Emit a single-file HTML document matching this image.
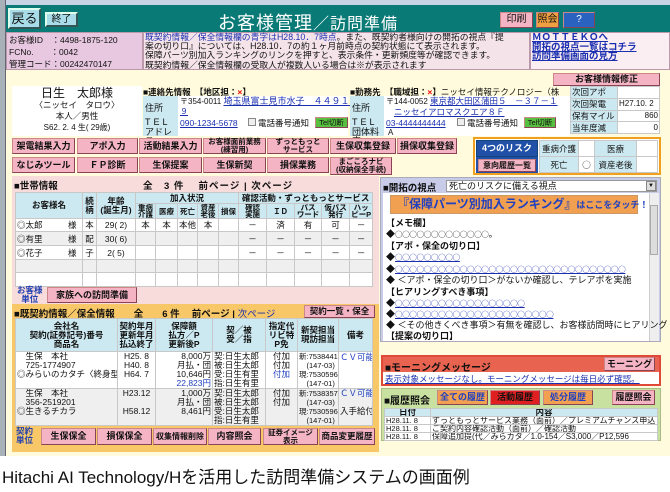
<!DOCTYPE html>
<html><head><meta charset="utf-8"><style>
*{margin:0;padding:0;box-sizing:border-box}
body{width:670px;height:492px;background:#fff;position:relative;overflow:hidden;font-family:"Liberation Sans","Noto Sans CJK JP",sans-serif;font-size:9px;color:#111}
.a{position:absolute}
.btn{position:absolute;background:#f4b4c4;border:1px solid #c88;border-right-color:#845;border-bottom-color:#845;font-weight:bold;font-size:9px;text-align:center;display:flex;align-items:center;justify-content:center;line-height:1;white-space:nowrap}
.b2{font-size:7.5px;line-height:8px}
table{border-collapse:collapse;table-layout:fixed;position:absolute}
td{border:1px solid #c8c8c8;font-size:8.5px;line-height:10px;padding:0 1px;white-space:nowrap;overflow:hidden}
.h td{background:#cce8f0;font-weight:bold;text-align:center;line-height:9px;font-size:8.5px}
.u{color:#1a2fb0;text-decoration:underline}
.lb{background:#cce8f0}
.ln{position:absolute;left:386px;white-space:nowrap;font-size:9px;line-height:10px}
.c{font-family:"Noto Sans CJK JP",sans-serif;font-size:7.5px;letter-spacing:-0.3px}
</style></head><body>
<div class="a" style="left:0;top:0;width:670px;height:456px;background:#fffbdc"></div>
<div class="a" style="left:0;top:0;width:670px;height:5px;background:#c8d4e4"></div>
<div class="a" style="left:0;top:0;width:6px;height:456px;background:#a8b0b8;border-right:1px solid #667"></div>
<div class="a" style="left:6px;top:5px;width:664px;height:27px;background:#0a7a76"></div>
<div class="btn" style="left:8px;top:8px;width:33px;height:21px;background:#a8dce8;font-weight:normal;font-size:13px;border:2px solid #dfe;border-right-color:#355;border-bottom-color:#355">戻る</div>
<div class="btn" style="left:45px;top:12px;width:33px;height:15px;background:#a8dce8;font-weight:normal;font-size:10px;border:2px solid #dfe;border-right-color:#355;border-bottom-color:#355">終了</div>
<div class="a" style="left:218px;top:9px;color:#fff;font-size:18px;letter-spacing:1px;white-space:nowrap">お客様管理<span style="font-size:16px">／訪問準備</span></div>
<div class="btn" style="left:500px;top:12px;width:33px;height:16px;font-weight:normal;font-size:10px">印刷</div>
<div class="btn" style="left:536px;top:12px;width:23px;height:16px;background:#f0a040;font-weight:normal;font-size:10px">照会</div>
<div class="btn" style="left:563px;top:12px;width:32px;height:16px;background:#2a62c0;color:#fff;font-weight:normal;font-size:10px">?</div>
<div class="a" style="left:6px;top:32px;width:137px;height:38px;background:#e8c8e0;border:1px solid #b9a"></div>
<div class="a" style="left:9px;top:34px;font-size:8.5px;line-height:12px;white-space:nowrap">お客様ID　：4498-1875-120<br>FCNo.　　：0042<br>管理コード：00242470147</div>
<div class="a" style="left:143px;top:32px;width:387px;height:38px;background:#f4e4ea;border:1px solid #b9a"></div>
<div class="a" style="left:145px;top:33px;font-size:8.8px;line-height:9.2px;white-space:nowrap"><span style="color:#2030b0">既契約情報／保全情報欄の青字はH28.10．7時点</span>。また、既契約者様向けの開拓の視点『提<br>案の切り口』については、H28.10．7の約１ヶ月前時点の契約状態にて表示されます。<br>保障パーツ別加入ランキングのリンクを押すと、表示条件・更新頻度等が確認できます。<br>既契約情報／保全情報欄の受取人が複数人いる場合は※が表示されます</div>
<div class="a" style="left:530px;top:32px;width:140px;height:38px;background:#fbeef2;border:1px solid #b9a"></div>
<div class="a u" style="left:532px;top:33px;font-size:9.5px;line-height:9.5px;font-weight:bold;white-space:nowrap">ＭＯＴＴＥＫＯへ<br>開拓の視点一覧はコチラ<br>訪問準備画面の見方</div>
<div class="a" style="left:12px;top:86px;width:130px;height:50px;background:#fff"></div>
<div class="a" style="left:12px;top:88px;width:130px;text-align:center;line-height:11px;white-space:nowrap"><span style="font-size:12px">日生　太郎様</span><br><span style="font-size:8.5px">〈ニッセイ　タロウ〉</span><br><span style="font-size:8.5px">本人／男性</span><br><span style="font-size:8px">S62. 2. 4 生( 29歳)</span></div>
<div class="a" style="left:143px;top:86px;font-size:8.5px;font-weight:bold;white-space:nowrap">■連絡先情報　【地区担：<span style="color:#e00">×</span>】</div>
<div class="a" style="left:143px;top:96px;width:205px;height:40px;background:#fff"></div>
<div class="a lb" style="left:143px;top:96px;width:35px;height:21px;padding:5px 2px">住所</div>
<div class="a lb" style="left:143px;top:117px;width:35px;height:11px;padding:0 2px;letter-spacing:3px">TEL</div>
<div class="a lb" style="left:143px;top:128px;width:35px;height:8px;padding:0 2px;line-height:9px">アドレス</div>
<div class="a" style="left:180px;top:96px;font-size:8px;line-height:10px;white-space:nowrap">〒354-0011 <span class="u" style="font-size:9px">埼玉県富士見市水子　４４９１－</span><br><span class="u">９</span></div>
<div class="a u" style="left:180px;top:118px;font-size:8.5px">090-1234-5678</div>
<div class="a" style="left:248px;top:118px;width:8px;height:8px;border:1px solid #888;background:#eee"></div>
<div class="a" style="left:258px;top:117px;font-size:8.5px">電話番号通知</div>
<div class="btn" style="left:315px;top:117px;width:33px;height:11px;background:#58c040;font-size:7.5px;font-weight:normal">Tel切断</div>
<div class="a" style="left:350px;top:86px;font-size:8.5px;font-weight:bold;white-space:nowrap">■勤務先　【職域担：<span style="color:#e00">×</span>】<span style="font-weight:normal">ニッセイ情報テクノロジー（株</span></div>
<div class="a" style="left:350px;top:96px;width:220px;height:40px;background:#fff"></div>
<div class="a lb" style="left:350px;top:96px;width:34px;height:21px;padding:5px 2px">住所</div>
<div class="a lb" style="left:350px;top:117px;width:34px;height:11px;padding:0 2px;letter-spacing:3px">TEL</div>
<div class="a lb" style="left:350px;top:128px;width:34px;height:8px;padding:0 2px;line-height:9px">団体料率</div>
<div class="a" style="left:386px;top:96px;font-size:8px;line-height:10px;white-space:nowrap">〒144-0052 <span class="u" style="font-size:8.5px">東京都大田区蒲田５　－３７－１</span><br>　<span class="u" style="font-size:8.5px">ニッセイアロマスクエア８Ｆ</span></div>
<div class="a u" style="left:386px;top:118px;font-size:8.5px">03-4444444444</div>
<div class="a" style="left:457px;top:118px;width:8px;height:8px;border:1px solid #888;background:#eee"></div>
<div class="a" style="left:467px;top:117px;font-size:8.5px">電話番号通知</div>
<div class="btn" style="left:524px;top:117px;width:32px;height:11px;background:#58c040;font-size:7.5px;font-weight:normal">Tel切断</div>
<div class="a" style="left:388px;top:128px;font-size:8px">A</div>
<div class="btn" style="left:553px;top:73px;width:107px;height:13px">お客様情報修正</div>
<table style="left:570px;top:86px;width:90px;height:48px"><tr><td class="lb" style="width:47px">次回アポ</td><td style="background:#fff"></td></tr><tr><td class="lb">次回架電</td><td style="background:#fff;font-size:8px">H27.10. 2</td></tr><tr><td class="lb">保有マイル</td><td style="background:#fff;text-align:right;font-size:8px">860</td></tr><tr><td class="lb">当年度減</td><td style="background:#fff;text-align:right;font-size:8px">0</td></tr></table>
<div class="btn" style="left:12px;top:138px;width:63px;height:16px">架電結果入力</div>
<div class="btn" style="left:77px;top:138px;width:61px;height:16px">アポ入力</div>
<div class="btn" style="left:139px;top:138px;width:63px;height:16px">活動結果入力</div>
<div class="btn b2" style="left:203px;top:138px;width:63px;height:16px">お客様面前業務<br>(練習用)</div>
<div class="btn b2" style="left:267px;top:138px;width:62px;height:16px">ずっともっと<br>サービス</div>
<div class="btn" style="left:330px;top:138px;width:66px;height:16px">生保収集登録</div>
<div class="btn" style="left:397px;top:138px;width:60px;height:16px">損保収集登録</div>
<div class="btn" style="left:12px;top:157px;width:63px;height:16px">なじみツール</div>
<div class="btn" style="left:77px;top:157px;width:61px;height:16px">ＦＰ診断</div>
<div class="btn" style="left:139px;top:157px;width:63px;height:16px">生保提案</div>
<div class="btn" style="left:203px;top:157px;width:63px;height:16px">生保新契</div>
<div class="btn" style="left:267px;top:157px;width:62px;height:16px">損保業務</div>
<div class="btn b2" style="left:330px;top:157px;width:62px;height:18px">まごころナビ<br>(収納保全手続)</div>
<div class="a" style="left:473px;top:137px;width:188px;height:38px;background:#fff;border:2px solid #f0a020"></div>
<div class="btn" style="left:476px;top:140px;width:62px;height:17px;background:#2050a8;color:#fff;border-color:#147">4つのリスク</div>
<div class="a" style="left:476px;top:157px;width:62px;height:16px;background:#2050a8"></div>
<div class="btn" style="left:478px;top:159px;width:58px;height:13px;font-size:8px">意向履歴一覧</div>
<table style="left:539px;top:140px;width:119px;height:33px"><tr><td class="lb" style="width:39px;text-align:center">重病介護</td><td style="width:16px"></td><td class="lb" style="width:42px;text-align:center">医療</td><td></td></tr><tr><td class="lb" style="text-align:center">死亡</td><td style="text-align:center;font-family:'Noto Sans CJK JP',sans-serif">○</td><td class="lb" style="text-align:center">資産老後</td><td></td></tr></table>
<div class="a" style="left:12px;top:176px;width:367px;height:128px;background:#f8dcdc"></div>
<div class="a" style="left:14px;top:178px;font-size:9.5px;font-weight:bold;white-space:nowrap">■世帯情報</div>
<div class="a" style="left:143px;top:178px;font-size:9.5px;font-weight:bold;white-space:nowrap;letter-spacing:1px">全　3 件　 前ページ | 次ページ</div>
<table style="left:15px;top:192px;width:357px;background:#fff">
<colgroup><col style="width:67px"><col style="width:14px"><col style="width:39px"><col style="width:20px"><col style="width:22px"><col style="width:20px"><col style="width:21px"><col style="width:20px"><col style="width:28px"><col style="width:28px"><col style="width:27px"><col style="width:28px"><col style="width:23px"></colgroup>
<tr class="h" style="height:11px"><td rowspan="2">お客様名</td><td rowspan="2">続<br>柄</td><td rowspan="2">年齢<br>(誕生月)</td><td colspan="5">加入状況</td><td colspan="5">確認活動・ずっともっとサービス</td></tr>
<tr class="h" style="height:14px;font-size:7.5px"><td style="font-size:7.5px;line-height:7px">重病<br>介護</td><td style="font-size:7.5px">医療</td><td style="font-size:7.5px">死亡</td><td style="font-size:7.5px;line-height:7px">資産<br>老後</td><td style="font-size:7.5px">損保</td><td style="font-size:7.5px;line-height:7px">確認<br>実施</td><td style="font-size:7.5px">ＩＤ</td><td style="font-size:7.5px;line-height:7px">パス<br>ワード</td><td style="font-size:7.5px;line-height:7px">仮パス<br>発行</td><td style="font-size:7.5px;line-height:7px">ハッ<br>ピーP</td></tr>
<tr style="height:13px;text-align:center"><td style="text-align:left">◎太郎　　　様</td><td>本</td><td>29( 2)</td><td>本</td><td>本</td><td>本他</td><td>本</td><td></td><td>－</td><td>済</td><td>有</td><td>可</td><td>－</td></tr>
<tr style="height:14px;text-align:center;background:#efefef"><td style="text-align:left">◎有里　　　様</td><td>配</td><td>30( 6)</td><td></td><td></td><td></td><td></td><td></td><td>－</td><td>－</td><td>－</td><td>－</td><td>－</td></tr>
<tr style="height:14px;text-align:center"><td style="text-align:left">◎花子　　　様</td><td>子</td><td>2( 5)</td><td></td><td></td><td></td><td></td><td></td><td>－</td><td>－</td><td>－</td><td>－</td><td>－</td></tr>
<tr style="height:13px;background:#efefef"><td></td><td></td><td></td><td></td><td></td><td></td><td></td><td></td><td></td><td></td><td></td><td></td><td></td></tr>
<tr style="height:14px"><td></td><td></td><td></td><td></td><td></td><td></td><td></td><td></td><td></td><td></td><td></td><td></td><td></td></tr>
</table>
<div class="a" style="left:17px;top:286px;font-size:8.5px;line-height:9px;font-weight:bold;color:#2040b0;text-align:center">お客様<br>単位</div>
<div class="btn" style="left:47px;top:287px;width:90px;height:16px">家族への訪問準備</div>
<div class="a" style="left:12px;top:304px;width:367px;height:148px;background:#f8c868"></div>
<div class="a" style="left:14px;top:306px;font-size:9.5px;font-weight:bold;white-space:nowrap">■既契約情報／保全情報　　全　　6 件　 前ページ | <span class="u" style="font-weight:normal">次ページ</span></div>
<div class="btn" style="left:304px;top:305px;width:71px;height:13px;font-size:8.5px">契約一覧・保全</div>
<table style="left:15px;top:318px;width:357px;background:#fff">
<colgroup><col style="width:102px"><col style="width:38px"><col style="width:57px"><col style="width:53px"><col style="width:32px"><col style="width:41px"><col style="width:34px"></colgroup>
<tr class="h" style="height:33px"><td>会社名<br>契約(証券記号)番号<br>商品名</td><td>契約年月<br>更新年月<br>払込終了</td><td>保障額<br>払方／P<br>更新後P</td><td>契／被<br>受／指</td><td>指定代<br>リビ特<br>P免</td><td>新契担当<br>現訪担当</td><td>備考</td></tr>
<tr style="height:37px;vertical-align:top;font-size:8px"><td style="line-height:9px">　生保　本社<br>　725-1774907<br>◎みらいのカタチ〈終身型</td><td style="line-height:9px;text-align:center">H25. 8<br>H40. 8<br>H64. 7</td><td style="line-height:9px;text-align:right">8,000万<br>月払・団<br>10,646円<br><span style="color:#2040c0">22,823円</span></td><td style="line-height:9px">契:日生太郎<br>被:日生太郎<br>受:日生有里<br>指:日生有里</td><td style="line-height:9px;text-align:center">付加<br>付加<br><span style="color:#2040c0">付加</span></td><td style="line-height:9px;font-size:7.5px">新:7538441<br>　(147-03)<br>現:7530596<br>　(147-01)</td><td style="color:#2040c0">ＣＶ可能</td></tr>
<tr style="height:37px;vertical-align:top;background:#efefef"><td style="line-height:9px">　生保　本社<br>　356-2519201<br>◎生きるチカラ</td><td style="line-height:9px;text-align:center">H23.12<br><br>H58.12</td><td style="line-height:9px;text-align:right">1,000万<br>月払・団<br>8,461円</td><td style="line-height:9px">契:日生太郎<br>被:日生太郎<br>受:日生太郎<br>指:日生有里</td><td style="line-height:9px;text-align:center">付加<br>付加</td><td style="line-height:9px;font-size:7.5px">新:7538357<br>　(147-03)<br>現:7530596<br>　(147-01)</td><td style="line-height:9px"><span style="color:#2040c0">ＣＶ可能</span><br><br>入手給付</td></tr>
</table>
<div class="a" style="left:16px;top:427px;font-size:8.5px;line-height:9px;font-weight:bold;color:#2040b0;text-align:center">契約<br>単位</div>
<div class="btn" style="left:41px;top:428px;width:55px;height:17px">生保保全</div>
<div class="btn" style="left:97px;top:428px;width:55px;height:17px">損保保全</div>
<div class="btn" style="left:153px;top:428px;width:54px;height:17px;font-size:8px">収集情報削除</div>
<div class="btn" style="left:208px;top:428px;width:53px;height:17px">内容照会</div>
<div class="btn b2" style="left:263px;top:428px;width:55px;height:17px">証券イメージ<br>表示</div>
<div class="btn" style="left:319px;top:428px;width:56px;height:17px;font-size:8.5px">商品変更履歴</div>
<div class="a" style="left:380px;top:177px;width:281px;height:165px;background:#c8cce8;border:1px solid #aab"></div>
<div class="a" style="left:383px;top:180px;font-size:9.5px;font-weight:bold">■開拓の視点</div>
<div class="a" style="left:446px;top:180px;width:211px;height:12px;background:#fff;border:1px solid #999;font-size:9px;line-height:10px;padding-left:2px">死亡のリスクに備える視点</div>
<div class="a" style="left:646px;top:181px;width:10px;height:10px;background:#ddd;border:1px solid #888;font-size:6px;text-align:center;line-height:9px">▼</div>
<div class="a" style="left:383px;top:193px;width:266px;height:148px;background:#fff"></div>
<div class="a" style="left:649px;top:193px;width:10px;height:148px;background:#eee;border-left:1px solid #ccc"></div>
<div class="a" style="left:650px;top:205px;width:8px;height:50px;background:#ddd;border:1px solid #aaa"></div>
<div class="a" style="left:390px;top:195px;width:248px;height:19px;background:#f0a050;border:1px solid #c96;color:#2040c0;font-weight:bold;font-size:12px;line-height:17px;padding-left:6px;white-space:nowrap">『保障パーツ別加入ランキング』<span style="font-size:9px">はここをタッチ！</span></div>
<div class="ln" style="top:218px;font-weight:bold">【メモ欄】</div>
<div class="ln" style="top:229px">◆<span class="c">○○○○○○○○○○○○○</span>。</div>
<div class="ln" style="top:241px;font-weight:bold">【アポ・保全の切り口】</div>
<div class="ln" style="top:252px">◆<span class="u c">○○○○○○○○○</span></div>
<div class="ln" style="top:264px">◆<span class="u c">○○○○○○○○○○○○○○○○○○○○○○○○○○○○○○○○</span></div>
<div class="ln" style="top:275px">◆ ＜アポ・保全の切り口＞がないか確認し、テレアポを実施</div>
<div class="ln" style="top:287px;font-weight:bold">【ヒアリングすべき事項】</div>
<div class="ln" style="top:298px">◆<span class="u c">○○○○○○○○○○○○○○○○○○</span></div>
<div class="ln" style="top:309px">◆<span class="u c">○○○○○○○○○○○○○○○○○○○○○○</span></div>
<div class="ln" style="top:320px">◆ ＜その他きくべき事項＞有無を確認し、お客様訪問時にヒアリング</div>
<div class="ln" style="top:331px;font-weight:bold">【提案の切り口】</div>
<div class="a" style="left:383px;top:342px;width:278px;height:2px;background:#fffbdc"></div>
<div class="a" style="left:381px;top:355px;width:280px;height:31px;background:#e86450;border:2px solid #e04838"></div>
<div class="a" style="left:385px;top:359px;font-size:10px;font-weight:bold">■モーニングメッセージ</div>
<div class="btn" style="left:604px;top:357px;width:51px;height:14px;font-size:9px">モーニング</div>
<div class="a" style="left:383px;top:372px;width:276px;height:12px;background:#fff"></div>
<div class="a u" style="left:385px;top:373px;font-size:8.5px;white-space:nowrap">表示対象メッセージなし。モーニングメッセージは毎日必ず確認。</div>
<div class="a" style="left:381px;top:388px;width:280px;height:53px;background:#c8e0a0;border:1px solid #ab8"></div>
<div class="a" style="left:384px;top:392px;font-size:10px;font-weight:bold">■履歴照会</div>
<div class="btn" style="left:437px;top:390px;width:51px;height:15px;background:#f0a050;color:#2040c0">全ての履歴</div>
<div class="btn" style="left:490px;top:390px;width:50px;height:15px;background:#e02020;color:#111">活動履歴</div>
<div class="btn" style="left:543px;top:390px;width:50px;height:15px;background:#f0a050;color:#2040c0">処分履歴</div>
<div class="btn" style="left:612px;top:390px;width:43px;height:15px">履歴照会</div>
<table style="left:384px;top:408px;width:274px;background:#fff">
<colgroup><col style="width:46px"><col></colgroup>
<tr class="h" style="height:8px"><td style="line-height:7px">日付</td><td style="line-height:7px">内容</td></tr>
<tr style="height:8px"><td style="line-height:7px;font-size:7.5px">H28.11. 8</td><td style="line-height:7px;font-size:8px">ずっともっとサービス業務（面前）／プレミアムチャンス申込</td></tr>
<tr style="height:8px"><td style="line-height:7px;font-size:7.5px">H28.11. 8</td><td style="line-height:7px;font-size:8px">ご契約内容確認活動（面前）／確認活動</td></tr>
<tr style="height:8px"><td style="line-height:7px;font-size:7.5px">H28.11. 8</td><td style="line-height:7px;font-size:8px">保障追加提(代／みらカタ／1.0-154／S3,000／P12,596</td></tr>
</table>
<div class="a" style="left:2px;top:468px;font-size:17px;line-height:20px;white-space:nowrap;color:#111">Hitachi AI Technology/Hを活用した訪問準備システムの画面例</div>
</body></html>
